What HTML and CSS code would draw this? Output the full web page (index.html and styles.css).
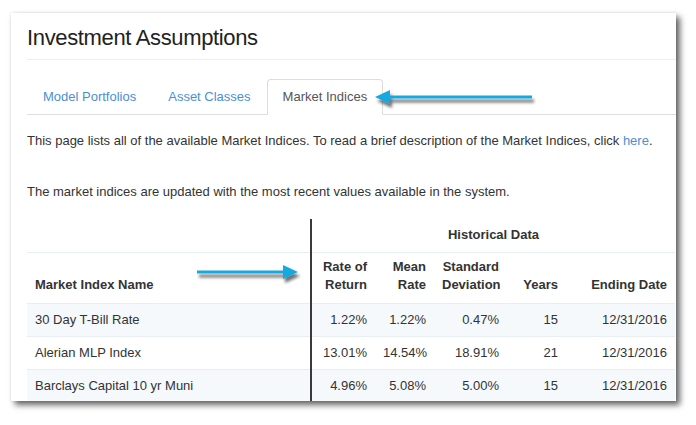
FILE: index.html
```html
<!DOCTYPE html>
<html>
<head>
<meta charset="utf-8">
<link rel="stylesheet" href="styles.css">
</head>
<body>
<div class="stage">
  <div class="card">
    <div class="inner">
      <h1 class="title">Investment Assumptions</h1>
      <ul class="tabs">
        <li class="tab"><a>Model Portfolios</a></li>
        <li class="tab"><a>Asset Classes</a></li>
        <li class="tab active"><a>Market Indices</a></li>
      </ul>
      <p class="para first">This page lists all of the available Market Indices. To read a brief description of the Market Indices, click <a class="link">here</a>.</p>
      <p class="para second">The market indices are updated with the most recent values available in the system.</p>
      <table class="grid">
        <colgroup>
          <col class="c1"><col class="c2"><col class="c3"><col class="c4"><col class="c5"><col class="c6">
        </colgroup>
        <thead>
          <tr class="group">
            <th class="name"></th>
            <th class="sep center" colspan="5">Historical Data</th>
          </tr>
          <tr class="heads">
            <th class="name">Market Index Name</th>
            <th class="sep num">Rate of<br>Return</th>
            <th class="num">Mean<br>Rate</th>
            <th class="num">Standard<br>Deviation</th>
            <th class="num">Years</th>
            <th class="num">Ending Date</th>
          </tr>
        </thead>
        <tbody>
          <tr class="odd">
            <td class="name">30 Day T-Bill Rate</td>
            <td class="sep num">1.22%</td>
            <td class="num">1.22%</td>
            <td class="num">0.47%</td>
            <td class="num">15</td>
            <td class="num">12/31/2016</td>
          </tr>
          <tr>
            <td class="name">Alerian MLP Index</td>
            <td class="sep num">13.01%</td>
            <td class="num">14.54%</td>
            <td class="num">18.91%</td>
            <td class="num">21</td>
            <td class="num">12/31/2016</td>
          </tr>
          <tr class="odd">
            <td class="name">Barclays Capital 10 yr Muni</td>
            <td class="sep num">4.96%</td>
            <td class="num">5.08%</td>
            <td class="num">5.00%</td>
            <td class="num">15</td>
            <td class="num">12/31/2016</td>
          </tr>
        </tbody>
      </table>
    </div>
  </div>
  <svg class="marks" width="696" height="425" viewBox="0 0 696 425">
    <defs>
      <filter id="sh" x="-20%" y="-100%" width="140%" height="300%">
        <feDropShadow dx="2" dy="4" stdDeviation="1.6" flood-color="#000" flood-opacity="0.55"/>
      </filter>
    </defs>
    <g filter="url(#sh)" fill="#18a8e0" stroke="#18a8e0">
      <line x1="387" y1="97" x2="532" y2="97" stroke-width="3"/>
      <polygon points="375,97 390,90 390,104" stroke="none"/>
      <line x1="197" y1="272" x2="286" y2="272" stroke-width="3"/>
      <polygon points="298,272 283,265 283,279" stroke="none"/>
    </g>
  </svg>
</div>
</body>
</html>
```
FILE: styles.css
```css
html, body {
  margin: 0;
  padding: 0;
  background: #ffffff;
}
.stage {
  position: relative;
  width: 696px;
  height: 425px;
  padding: 13px 0 0 11px;
  box-sizing: border-box;
  font-family: "Liberation Sans", Arial, sans-serif;
  font-size: 13px;
  line-height: 18px;
  color: #333333;
}
.card {
  width: 665px;
  height: 388px;
  background: #ffffff;
  overflow: hidden;
  box-shadow: 4px 4px 6px rgba(0, 0, 0, 0.6), 0 0 3px rgba(0, 0, 0, 0.12);
}
.inner {
  padding: 0 0 0 16px;
}
.title {
  margin: 0;
  padding: 13px 0 9px 0;
  font-size: 22px;
  line-height: 24px;
  font-weight: normal;
  color: #222222;
  letter-spacing: -0.35px;
  border-bottom: 1px solid #eeeeee;
}
.tabs {
  list-style: none;
  margin: 19px 0 0 0;
  padding: 0;
  display: flex;
  border-bottom: 1px solid #dddddd;
}
.tab {
  margin: 0 0 -1px 0;
}
.tab a {
  display: block;
  padding: 8px 15px;
  border: 1px solid transparent;
  border-radius: 4px 4px 0 0;
  color: #4a8fd6;
}
.tab.active a {
  color: #555555;
  background: #ffffff;
  border-color: #dddddd;
  border-bottom-color: transparent;
}
.para {
  margin: 0;
}
.para.first {
  margin-top: 17px;
}
.para.second {
  margin-top: 33px;
}
.link {
  color: #4a8fd6;
}
.grid {
  margin-top: 18px;
  width: 648px;
  table-layout: fixed;
  border-collapse: collapse;
  color: #333333;
}
.c1 { width: 284px; }
.c2 { width: 64px; }
.c3 { width: 59px; }
.c4 { width: 73px; }
.c5 { width: 59px; }
.c6 { width: 109px; }
.grid th, .grid td {
  padding: 7px 8px;
  text-align: left;
  white-space: nowrap;
}
.grid th {
  font-weight: bold;
}
.grid .group th {
  padding: 7px 8px 8px 8px;
}
.grid .heads th {
  padding: 5px 8px 9px 8px;
  vertical-align: bottom;
  border-top: 1px solid #e8eef3;
}
.grid tbody td {
  border-top: 1px solid #e8eef3;
}
.grid .center {
  text-align: center;
}
.grid .num {
  text-align: right;
}
.grid .sep {
  border-left: 2px solid #3a3a3a;
}
.grid tr.odd td {
  background: #f5f9fc;
}
.marks {
  position: absolute;
  left: 0;
  top: 0;
  pointer-events: none;
}
```
